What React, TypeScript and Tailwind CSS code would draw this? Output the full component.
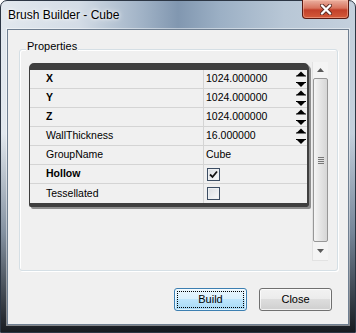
const rows = [
  { name: 'X', bold: true, value: '1024.000000', spin: true },
  { name: 'Y', bold: true, value: '1024.000000', spin: true },
  { name: 'Z', bold: true, value: '1024.000000', spin: true },
  { name: 'WallThickness', value: '16.000000', spin: true },
  { name: 'GroupName', value: 'Cube' },
  { name: 'Hollow', bold: true, check: true, checked: true },
  { name: 'Tessellated', check: true, checked: false },
];

const Spinner = () => (
  <svg width="10" height="18" viewBox="0 0 10 18" className="ml-auto mr-[1px] shrink-0">
    <polygon points="0.5,6 5,1.5 9.5,6" fill="#000" />
    <rect x="0" y="5.5" width="10" height="1" fill="#000" />
    <rect x="0" y="12" width="10" height="1" fill="#000" />
    <polygon points="0.5,12.5 9.5,12.5 5,17" fill="#000" />
  </svg>
);

const CheckBox = ({ checked }: { checked?: boolean }) => (
  <div className="ml-[1px] w-[13px] h-[13px] border border-[#3c4d63] bg-[linear-gradient(135deg,#d9dde2,#f8f9fa)] shadow-[inset_0_0_0_1px_#eef0f2] flex items-center justify-center">
    {checked && (
      <svg width="9" height="9" viewBox="0 0 9 9">
        <path d="M1 4.5 L3.5 7 L8 1.5" fill="none" stroke="#111" strokeWidth="1.8" />
      </svg>
    )}
  </div>
);

const App = () => {
  return (
    <div
      className="w-[356px] h-[333px] flex flex-col rounded-t-[7px] border border-[#2c3644] bg-[linear-gradient(to_bottom,rgba(0,0,0,0)_40%,rgba(40,60,85,0.5)_70%,rgba(14,17,22,0.95)_100%),linear-gradient(to_right,#e2e8ee_0%,#d3dce6_22%,#a0b2c6_40%,#8197b0_50%,#9cb0c5_62%,#b8c7d6_80%,#c4d0dd_100%)]"
      style={{ fontFamily: '"Liberation Sans", Arial, sans-serif' }}
    >
      {/* title bar */}
      <div className="h-[28px] flex items-start shrink-0">
        <div className="mt-[6px] ml-[7px] text-[12px] leading-[16px] text-black [text-shadow:0_0_6px_#fff,0_0_3px_#fff]">
          Brush Builder - Cube
        </div>
        <div className="ml-auto mr-[6px] -mt-[1px] w-[47px] h-[19px] rounded-b-[4px] border border-t-0 border-[#5a1a12] bg-[linear-gradient(to_bottom,#eab0a0,#d8745e_45%,#c2402a_55%,#d45a3a)] flex items-center justify-center shadow-[inset_0_0_0_1px_rgba(255,200,180,0.45)]">
          <svg width="12" height="11" viewBox="0 0 12 11">
            <path d="M2 1.5 L10 9.5 M10 1.5 L2 9.5" stroke="#5a2a22" strokeWidth="4" strokeLinecap="round" />
            <path d="M2 1.5 L10 9.5 M10 1.5 L2 9.5" stroke="#fff" strokeWidth="2.4" strokeLinecap="round" />
          </svg>
        </div>
      </div>

      {/* client */}
      <div className="flex-1 mx-[6px] mb-[7px] border border-[#6f7f91] bg-[#f0f0f0] flex flex-col shadow-[0_0_0_1px_rgba(255,255,255,0.45)]">
        <div className="relative mt-[19px] ml-[11px] w-[319px] h-[222px] rounded-[3px] border border-[#d5dfe5] shadow-[inset_1px_1px_0_#fff,1px_1px_0_#fff]">
          <div className="absolute left-[6px] -top-[10px] px-[1px] bg-[#f0f0f0] text-[11px] leading-[13px] text-black">
            Properties
          </div>
          <div className="flex items-start pt-[12px] pl-[9px]">
            {/* property grid */}
            <div className="mt-[1px] w-[280px] border-t-[7px] border-l border-r-[2px] border-b-[4px] border-[#3f3f3f] rounded-t-[5px] rounded-b-[2px] shadow-[2px_2px_0_#8e8e8e] text-[10.5px] text-black">
              {rows.map((r, i) => (
                <div
                  key={r.name}
                  className={`flex h-[19px] ${i < rows.length - 1 ? 'border-b border-[#d4d4d4]' : ''}`}
                >
                  <div className={`w-[174px] border-r border-[#d4d4d4] pl-[16px] flex items-center ${r.bold ? 'font-bold' : ''}`}>
                    {r.name}
                  </div>
                  <div className="flex-1 flex items-center pl-[2px]">
                    {r.check ? <CheckBox checked={r.checked} /> : <span>{r.value}</span>}
                    {r.spin && <Spinner />}
                  </div>
                </div>
              ))}
            </div>

            {/* scrollbar */}
            <div className="ml-[3px] w-[16px] h-[199px] flex flex-col border-l border-b border-[#e2e2e2] bg-[#f4f4f4]">
              <div className="h-[16px] flex items-center justify-center">
                <svg width="7" height="4" viewBox="0 0 7 4">
                  <polygon points="0,4 3.5,0 7,4" fill="#5a5a5a" />
                </svg>
              </div>
              <div className="h-[164px] rounded-[2px] border border-[#979797] bg-[linear-gradient(to_right,#f5f5f5,#e6e6e6_45%,#d6d6d6)] flex items-center justify-center">
                <div className="flex flex-col gap-[1px]">
                  <div className="w-[6px] h-[1px] bg-[#777]" />
                  <div className="w-[6px] h-[1px] bg-[#777]" />
                  <div className="w-[6px] h-[1px] bg-[#777]" />
                  <div className="w-[6px] h-[1px] bg-[#777]" />
                </div>
              </div>
              <div className="flex-1 flex items-center justify-center">
                <svg width="7" height="4" viewBox="0 0 7 4">
                  <polygon points="0,0 7,0 3.5,4" fill="#5a5a5a" />
                </svg>
              </div>
            </div>
          </div>
        </div>

        {/* buttons */}
        <div className="flex justify-end gap-[12px] mt-[17px] mr-[16px] text-[11px] text-black">
          <button className="relative w-[73px] h-[23px] rounded-[3px] border border-[#3c7fb1] bg-[linear-gradient(to_bottom,#eaf6fd,#d9f0fc_50%,#bee6fd_50%,#a7d9f5)] shadow-[inset_0_0_0_1px_rgba(255,255,255,0.6)]">
            <span className="absolute inset-[2px] border border-dotted border-black" />
            Build
          </button>
          <button className="w-[73px] h-[23px] rounded-[3px] border border-[#707070] bg-[linear-gradient(to_bottom,#f2f2f2,#ebebeb_50%,#dddddd_50%,#cfcfcf)] shadow-[inset_0_0_0_1px_rgba(255,255,255,0.7)]">
            Close
          </button>
        </div>
      </div>
    </div>
  );
};

export default App;
